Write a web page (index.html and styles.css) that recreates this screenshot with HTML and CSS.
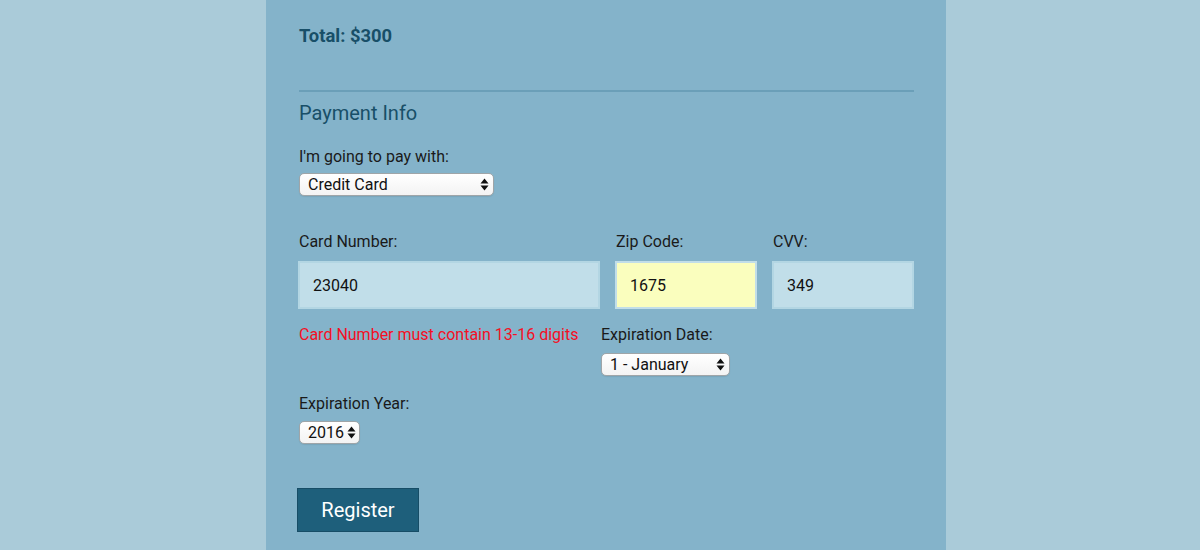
FILE: index.html
```html
<!DOCTYPE html>
<html>
<head>
<meta charset="utf-8">
<link rel="stylesheet" href="styles.css">
</head>
<body>
<div class="page">
  <form class="panel">
    <h3 class="total">Total: $300</h3>
    <hr class="divider">
    <h2 class="section-title">Payment Info</h2>

    <label class="label" for="payment">I'm going to pay with:</label>
    <span class="select-wrap sel-payment">
      <select id="payment" class="select"><option>Credit Card</option></select>
      <svg class="arrows" width="9" height="13" viewBox="0 0 9 13"><path d="M4.5 0.5 L8.5 5.5 H0.5 Z M4.5 12.5 L8.5 7.5 H0.5 Z" fill="#111"/></svg>
    </span>

    <div class="card-row">
      <div class="field f-card">
        <label class="label">Card Number:</label>
        <input class="input" type="text" value="23040">
      </div>
      <div class="field f-zip">
        <label class="label">Zip Code:</label>
        <input class="input input-focus" type="text" value="1675">
      </div>
      <div class="field f-cvv">
        <label class="label">CVV:</label>
        <input class="input" type="text" value="349">
      </div>
    </div>

    <div class="exp-row">
      <div class="error">Card Number must contain 13-16 digits</div>
      <div class="field">
        <label class="label">Expiration Date:</label>
        <span class="select-wrap sel-month">
          <select class="select"><option>1 - January</option></select>
          <svg class="arrows" width="9" height="13" viewBox="0 0 9 13"><path d="M4.5 0.5 L8.5 5.5 H0.5 Z M4.5 12.5 L8.5 7.5 H0.5 Z" fill="#111"/></svg>
        </span>
      </div>
    </div>

    <div class="field year-field">
      <label class="label">Expiration Year:</label>
      <span class="select-wrap sel-year">
        <select class="select"><option>2016</option></select>
        <svg class="arrows" width="9" height="13" viewBox="0 0 9 13"><path d="M4.5 0.5 L8.5 5.5 H0.5 Z M4.5 12.5 L8.5 7.5 H0.5 Z" fill="#111"/></svg>
      </span>
    </div>

    <button class="btn" type="button">Register</button>
  </form>
</div>
</body>
</html>
```
FILE: styles.css
```css
* { box-sizing: border-box; }
html, body {
  margin: 0;
  padding: 0;
  height: 100%;
}
body {
  background: #aacbd9;
  font-family: Roboto, "Liberation Sans", sans-serif;
  color: #1a1a1a;
  overflow: hidden;
}
.page {
  height: 100%;
}
.panel {
  width: 680px;
  height: 100%;
  margin-left: 266px;
  background: #84b3ca;
  padding: 24px 32px 0 33px;
}
.total {
  margin: 0;
  font-size: 18.4px;
  line-height: 24px;
  font-weight: 700;
  color: #184f68;
}
.divider {
  margin: 42px 0 0 0;
  border: 0;
  border-top: 2px solid #6b9fb8;
  height: 0;
}
.section-title {
  margin: 9px 0 0 0;
  font-size: 20px;
  line-height: 24px;
  font-weight: 400;
  color: #184f68;
}
.label {
  display: block;
  font-size: 16px;
  line-height: 20px;
  color: #1a1a1a;
}
.section-title + .label {
  margin-top: 22px;
}
.select-wrap {
  position: relative;
  display: block;
  margin-top: 6px;
}
.select {
  -webkit-appearance: none;
  appearance: none;
  display: block;
  height: 23px;
  border: 1px solid #9fa5a8;
  border-radius: 5px;
  background: linear-gradient(#ffffff, #f3f3f3);
  font-family: Roboto, "Liberation Sans", sans-serif;
  font-size: 16px;
  line-height: 21px;
  color: #111;
  padding: 0 0 0 8px;
  margin: 0;
  box-shadow: 0 1px 1px rgba(0,0,0,0.08);
}
.arrows {
  position: absolute;
  top: 5px;
  pointer-events: none;
}
.sel-payment .select { width: 195px; }
.sel-payment .arrows { left: 181px; }
.sel-month .select { width: 129px; }
.sel-month .arrows { left: 115px; }
.sel-year .select { width: 61px; padding-left: 8px; }
.sel-year .arrows { left: 48px; }

.card-row {
  display: flex;
  gap: 15px;
  margin-top: 36px;
  margin-left: -1px;
}
.field .label {
  margin-left: 1px;
}
.card-row .label {
  margin-bottom: 9px;
}
.f-card { width: 302px; }
.f-zip { width: 142px; }
.f-cvv { width: 142px; }
.input {
  display: block;
  width: 100%;
  height: 48px;
  border: 2px solid #b3d6e3;
  background: #c1dee9;
  font-family: Roboto, "Liberation Sans", sans-serif;
  font-size: 16px;
  color: #111;
  padding: 0 0 0 13px;
  margin: 0;
  outline: none;
}
.input-focus {
  background: #fafebe;
  border-color: #c1dee9;
}
.exp-row {
  display: flex;
  margin-top: 16px;
}
.error {
  width: 302px;
  font-size: 16px;
  line-height: 20px;
  color: #f50f24;
}
.exp-row .select-wrap {
  margin-top: 8px;
}
.exp-row .label { margin-left: 0; }
.year-field {
  margin-top: 18px;
}
.year-field .label { margin-left: 0; }
.year-field .select-wrap { margin-top: 7px; }
.btn {
  display: block;
  margin: 44px 0 0 -2px;
  width: 122px;
  height: 44px;
  background: #1e5f7b;
  border: 1px solid #174d66;
  color: #ffffff;
  font-family: Roboto, "Liberation Sans", sans-serif;
  font-size: 20px;
  padding: 0;
  cursor: pointer;
}
```
